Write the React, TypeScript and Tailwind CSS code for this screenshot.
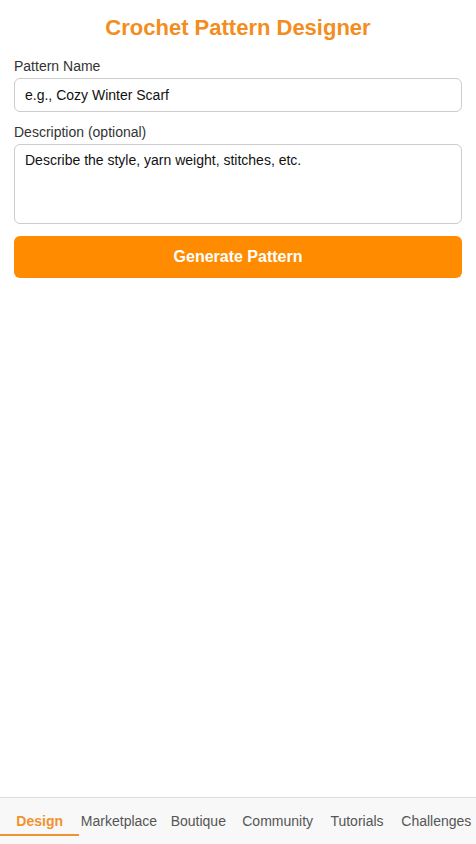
import React from "react";

const tabs = ["Design", "Marketplace", "Boutique", "Community", "Tutorials", "Challenges"];

export default function App() {
  return (
    <div
      className="flex h-[844px] w-full flex-col bg-white"
      style={{ fontFamily: '"Liberation Sans", Arial, sans-serif' }}
    >
      <div className="flex-1 overflow-hidden px-[14px] pt-[14px]">
        <h1 className="mb-[15px] text-center text-[22px] font-bold leading-[28px] text-[#f28d1e]">
          Crochet Pattern Designer
        </h1>
        <label className="mb-[3px] block text-[14px] leading-[18px] text-[#333]">Pattern Name</label>
        <input
          className="mb-[11px] block h-[34px] w-full rounded-[6px] border border-[#ccc] px-[10px] text-[14px] text-[#111] placeholder:text-[#111] outline-none"
          placeholder="e.g., Cozy Winter Scarf"
        />
        <label className="mb-[3px] block text-[14px] leading-[18px] text-[#333]">Description (optional)</label>
        <textarea
          className="mb-[12px] block h-[80px] w-full resize-none rounded-[6px] border border-[#ccc] px-[10px] py-[6px] text-[14px] leading-[18px] text-[#111] placeholder:text-[#111] outline-none"
          placeholder="Describe the style, yarn weight, stitches, etc."
        />
        <button className="flex h-[42px] w-full items-center justify-center rounded-[6px] bg-[#ff8c00] text-[16px] font-bold text-white">
          Generate Pattern
        </button>
      </div>
      <div className="flex border-t border-[#ddd] bg-[#f8f8f8] pb-[8px]">
        {tabs.map((t, i) => (
          <div
            key={t}
            className={
              i === 0
                ? "flex flex-1 basis-0 justify-center whitespace-nowrap border-b-2 border-[#f0922f] pt-[15px] pb-[4px] text-[14px] font-bold leading-[17px] text-[#f0922f]"
                : "flex flex-1 basis-0 justify-center whitespace-nowrap border-b-2 border-transparent pt-[15px] pb-[4px] text-[14px] leading-[17px] text-[#555]"
            }
          >
            {t}
          </div>
        ))}
      </div>
    </div>
  );
}
